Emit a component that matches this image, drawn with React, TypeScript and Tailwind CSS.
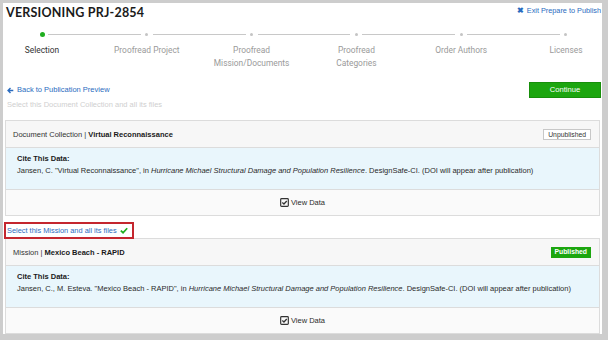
import React from "react";

const steps: string[][] = [
  ["Selection"],
  ["Proofread Project"],
  ["Proofread", "Mission/Documents"],
  ["Proofread", "Categories"],
  ["Order Authors"],
  ["Licenses"],
];

function CheckSquare() {
  return (
    <svg width="9" height="9" viewBox="0 0 10 10" className="mr-[2px]">
      <rect x="0.75" y="0.75" width="8.5" height="8.5" rx="1" fill="none" stroke="#333" strokeWidth="1.3" />
      <path d="M2.6 5 L4.4 6.7 L7.5 3.3" fill="none" stroke="#333" strokeWidth="1.4" />
    </svg>
  );
}

function Card({
  kind,
  name,
  badge,
  citation,
}: {
  kind: string;
  name: string;
  badge: React.ReactNode;
  citation: React.ReactNode;
}) {
  return (
    <div className="mx-[2px] border border-[#dcdcdc] bg-white">
      <div className="h-[27px] flex items-center justify-between pl-[7px] pr-[8px] bg-[#f7f7f7] border-b border-[#dcdcdc] text-[7.5px] text-[#333]">
        <div className="pt-[1px]">
          {kind} | <span className="font-bold text-[#1a1a1a]">{name}</span>
        </div>
        {badge}
      </div>
      <div className="h-[42px] bg-[#e9f6fc] border-b border-[#dcdcdc] pl-[11px] pt-[5px] text-[7.5px] text-[#2a2a2a] leading-[12px]">
        <div className="font-bold text-[#1a1a1a]">Cite This Data:</div>
        <div>{citation}</div>
      </div>
      <div className="h-[25px] bg-[#fafafa] flex items-center justify-center text-[7.5px] text-[#2a2a2a]">
        <CheckSquare />
        View Data
      </div>
    </div>
  );
}

export default function App() {
  return (
    <div className="w-[608px] h-[340px] bg-[#cdcdcd] pt-[3px] pl-[3px] pr-[6px] pb-[6px]" style={{ fontFamily: '"Liberation Sans", Arial, sans-serif' }}>
      <div className="h-[331px] bg-white overflow-hidden">
        {/* header */}
        <div className="h-[20px] flex items-start justify-between">
          <div className="pl-[3px] leading-[20px] text-[12.5px] font-bold text-[#1a1a1a] tracking-[0.2px]" style={{ fontFamily: "Lato, sans-serif" }}>
            VERSIONING PRJ-2854
          </div>
          <div className="mt-[3px] mr-[1px] leading-[10px] text-[7.3px] text-[#2a6cc0] flex items-center">
            <span className="text-[8px] font-bold mr-[3px]">✖</span>Exit Prepare to Publish
          </div>
        </div>

        {/* stepper */}
        <div className="h-[47px] flex items-start pl-[39px] pr-[36px]" style={{ fontFamily: "Roboto, sans-serif" }}>
          {steps.map((lines, i) => (
            <React.Fragment key={i}>
              {i > 0 && <div className="flex-1 h-px bg-[#c8c8c8] mt-[11px] mx-[6px]" />}
              <div className="w-0 flex flex-col items-center">
                <div className="h-[6px] mt-[8px] flex items-center justify-center">
                  {i === 0 ? (
                    <div className="w-[5px] h-[5px] rounded-full bg-[#1fae1f]" />
                  ) : (
                    <div className="w-[3px] h-[3px] rounded-full bg-[#c4c4c4]" />
                  )}
                </div>
                <div className={`mt-[7px] whitespace-nowrap text-center text-[8.4px] leading-[12.5px] ${i === 0 ? "text-[#333]" : "text-[#9a9a9a]"}`}>
                  {lines.map((l, j) => (
                    <div key={j}>{l}</div>
                  ))}
                </div>
              </div>
            </React.Fragment>
          ))}
        </div>

        {/* back + continue */}
        <div className="mt-[12px] h-[16px] flex items-center justify-between pl-[4px] pr-[1px]">
          <div className="text-[7.5px] text-[#2a6cc0] flex items-center">
            <svg width="7" height="7" viewBox="0 0 10 10" className="mr-[3px]">
              <path d="M9 5 H2 M5 1.5 L1.5 5 L5 8.5" fill="none" stroke="#2a6cc0" strokeWidth="2" />
            </svg>
            Back to Publication Preview
          </div>
          <div className="w-[72px] h-[16px] bg-[#1ca60f] border border-[#178f0b] flex items-center justify-center text-white text-[7.6px]">
            Continue
          </div>
        </div>

        <div className="h-[14px] leading-[14px] pl-[4px] text-[7.5px] text-[#cfcfcf]">
          Select this Document Collection and all its files
        </div>

        <div className="mt-[8px]">
          <Card
            kind="Document Collection"
            name="Virtual Reconnaissance"
            badge={
              <div className="h-[11px] px-[4px] border border-[#c8c8c8] bg-white text-[6.8px] leading-[9px] text-[#333] flex items-center">
                Unpublished
              </div>
            }
            citation={
              <>
                Jansen, C. "Virtual Reconnaissance", in <i>Hurricane Michael Structural Damage and Population Resilience</i>. DesignSafe-CI. (DOI will appear after publication)
              </>
            }
          />
        </div>

        <div className="mt-[6px] ml-[1px] w-[130px] h-[17px] border-2 border-[#c4262e] flex items-center pl-[1px] text-[7.4px] text-[#2a6cc0] relative z-10">
          Select this Mission and all its files
          <svg width="8" height="7" viewBox="0 0 10 8" className="ml-[3px]">
            <path d="M1 4.2 L3.8 6.8 L9 1.2" fill="none" stroke="#1fae1f" strokeWidth="2.2" />
          </svg>
        </div>

        <div className="-mt-px">
          <Card
            kind="Mission"
            name="Mexico Beach - RAPID"
            badge={
              <div className="h-[11px] px-[4px] bg-[#1ca60f] text-[6.8px] font-bold text-white flex items-center">
                Published
              </div>
            }
            citation={
              <>
                Jansen, C., M. Esteva. "Mexico Beach - RAPID", in <i>Hurricane Michael Structural Damage and Population Resilience</i>. DesignSafe-CI. (DOI will appear after publication)
              </>
            }
          />
        </div>
      </div>
    </div>
  );
}
